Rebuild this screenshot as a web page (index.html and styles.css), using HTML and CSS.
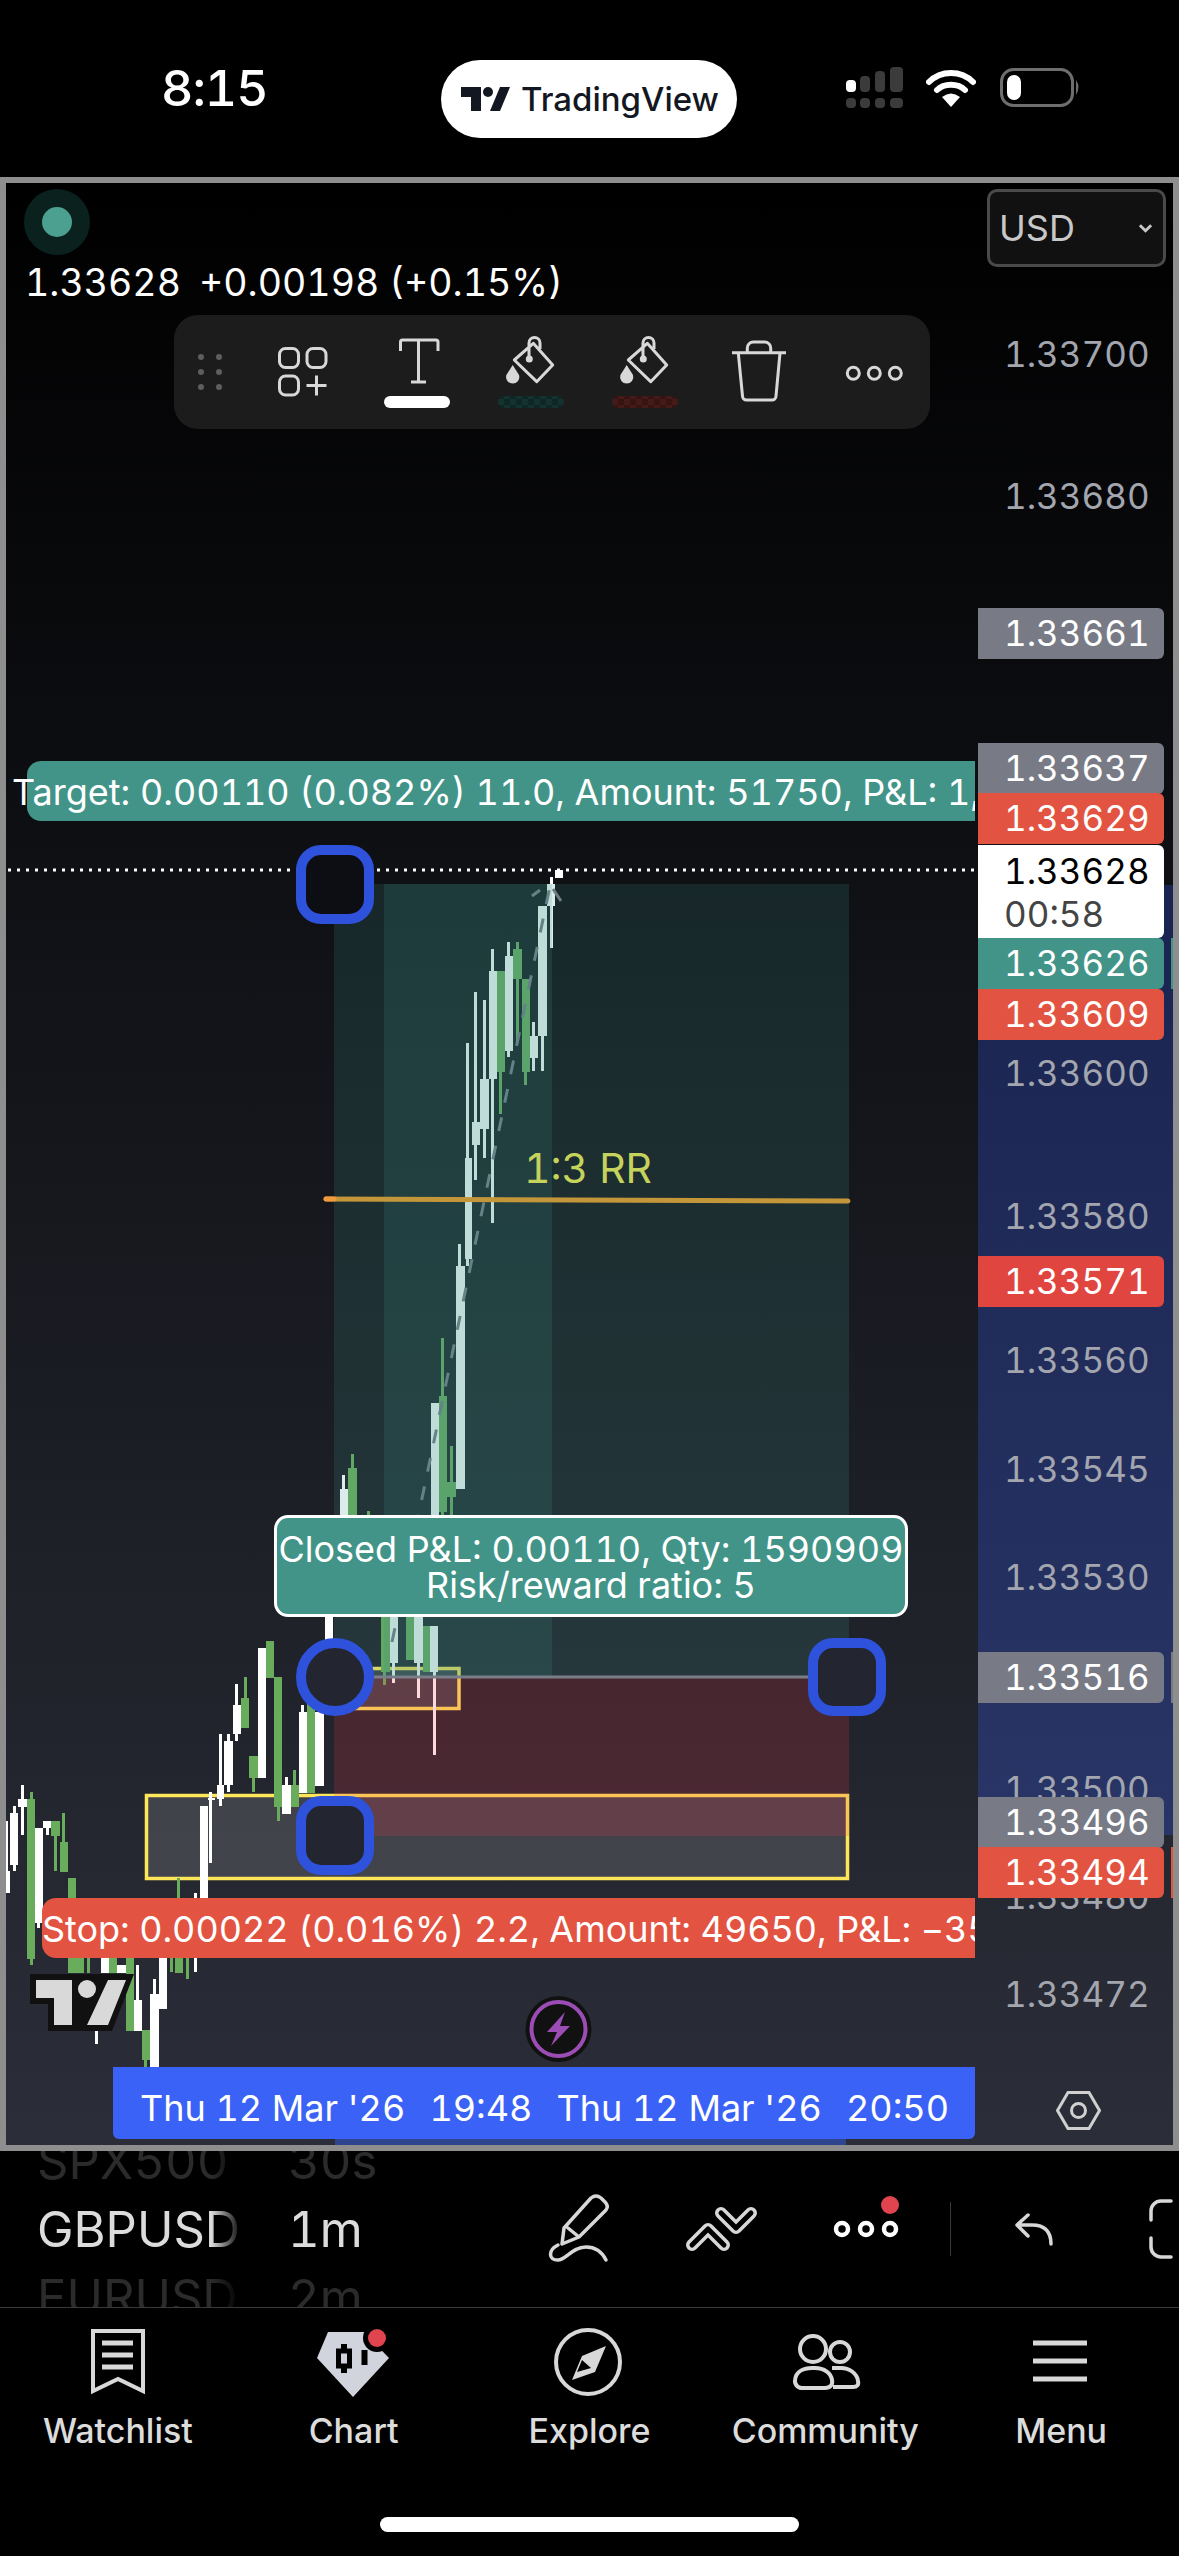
FILE: index.html
```html
<!DOCTYPE html>
<html lang="en">
<head>
    <meta charset="UTF-8"/>
    <title>GBPUSD chart</title>
    <link rel="stylesheet" href="styles.css">
</head>
<body>
<header class="status-bar">
    <span class="clock">8:15</span>
    <div class="app-pill">
        <svg class="pill-mark" viewBox="0 0 49 24"><path d="M0 0H20V24H10V10H0Z"/><circle cx="27" cy="5" r="5"/><path d="M39 0H49L39 24H29Z"/></svg>
        <span>TradingView</span>
    </div>
    <svg class="signal" viewBox="0 0 58 44">
        <rect class="on" x="0" y="14" width="10" height="12" rx="4"/>
        <rect x="14" y="10" width="10" height="16" rx="4"/>
        <rect x="29" y="5" width="10" height="21" rx="4"/>
        <rect x="44" y="1" width="13" height="25" rx="4"/>
        <rect x="0" y="32" width="10" height="10" rx="4"/>
        <rect x="14" y="32" width="10" height="10" rx="4"/>
        <rect x="29" y="32" width="10" height="10" rx="4"/>
        <rect x="44" y="32" width="13" height="10" rx="4"/>
    </svg>
    <svg class="wifi" viewBox="0 0 50 38">
        <path class="arc" d="M3 13C15 1 35 1 47 13"/>
        <path class="arc" d="M11 21C18 14 32 14 39 21"/>
        <path class="wedge" d="M16 28Q25 21 34 28L25 38Z"/>
    </svg>
    <svg class="battery" viewBox="0 0 82 40">
        <rect class="shell" x="1.5" y="1.5" width="71" height="36" rx="12"/>
        <rect class="level" x="7" y="7" width="14" height="25" rx="7"/>
        <path class="nub" d="M76 12Q81 19 76 27Z"/>
    </svg>
</header>

<main class="chart">
    <svg class="plot" viewBox="6 183 972 1962">
        <defs>
            <pattern id="checkTeal" width="12" height="12" patternUnits="userSpaceOnUse">
                <rect width="12" height="12" fill="#0e2624"/>
                <rect width="6" height="6" fill="#143230"/>
                <rect x="6" y="6" width="6" height="6" fill="#143230"/>
            </pattern>
            <pattern id="checkRed" width="12" height="12" patternUnits="userSpaceOnUse">
                <rect width="12" height="12" fill="#351412"/>
                <rect width="6" height="6" fill="#451b19"/>
                <rect x="6" y="6" width="6" height="6" fill="#451b19"/>
            </pattern>
        </defs>

        <!-- zones under the candles -->
        <rect class="zone" x="146.5" y="1795.5" width="701" height="83"/>
        <rect class="zone" x="356" y="1668.5" width="103" height="40"/>

        <!-- candles -->
        <path class="candle-up" d="M547 884h8v22h-8zM550 877h3v71h-3zM538 906h9v130h-9zM541 906h3v165h-3zM530 1036h8v22h-8zM532 1022h3v49h-3zM505 956h8v95h-8zM507 942h3v115h-3zM489 971h8v108h-8zM491 949h3v274h-3zM480 1079h9v50h-9zM483 1000h3v158h-3zM472 1122h8v23h-8zM474 992h3v188h-3zM465 1158h7v101h-7zM466 1043h3v223h-3zM456 1266h9v223h-9zM458 1244h3v26h-3zM431 1403h8v117h-8zM340 1489h8v31h-8zM342 1475h3v15h-3zM325 1616h8v29h-8zM390 1616h8v47h-8zM392 1616h3v67h-3zM414 1616h9v47h-9zM417 1616h3v82h-3zM430 1626h8v46h-8zM433 1626h3v129h-3zM258 1648h8v130h-8zM233 1705h8v29h-8zM235 1684h3v57h-3zM224 1741h9v44h-9zM227 1734h3v58h-3zM217 1785h7v14h-7zM219 1734h3v72h-3zM282 1785h9v29h-9zM285 1777h3v37h-3zM299 1712h8v81h-8zM301 1705h3v7h-3zM315 1712h9v74h-9zM209 1792h3v71h-3zM208 1798h7v2h-7zM200 1806h8v92h-8zM194 1893h3v79h-3zM6 1821h2v50h-2zM6 1871h4v22h-4zM10 1813h8v52h-8zM13 1806h3v65h-3zM18 1799h9v8h-9zM21 1785h3v50h-3zM35 1828h8v95h-8zM37 1828h3v100h-3zM43 1821h8v7h-8zM46 1821h3v14h-3zM101 1958h8v15h-8zM117 1965h9v8h-9zM134 2000h8v31h-8zM136 1965h3v35h-3zM150 1994h9v73h-9zM153 1979h3v15h-3zM159 1958h8v51h-8zM95 2031h3v13h-3z"/>
        <path class="candle-down" d="M522 979h8v93h-8zM524 979h3v106h-3zM513 949h9v30h-9zM516 942h3v100h-3zM497 971h8v101h-8zM499 971h3v143h-3zM447 1482h9v15h-9zM450 1446h3v74h-3zM439 1396h8v116h-8zM441 1338h3v182h-3zM348 1468h9v52h-9zM351 1454h3v16h-3zM367 1511h3v9h-3zM381 1616h9v56h-9zM383 1616h3v69h-3zM406 1616h8v44h-8zM423 1626h7v46h-7zM266 1641h8v37h-8zM274 1677h8v130h-8zM277 1677h3v144h-3zM249 1756h9v22h-9zM252 1756h3v36h-3zM241 1698h8v30h-8zM244 1677h3v21h-3zM291 1785h8v22h-8zM293 1770h3v15h-3zM307 1695h8v98h-8zM27 1799h8v160h-8zM30 1792h3v173h-3zM51 1821h9v15h-9zM54 1821h3v50h-3zM60 1842h8v30h-8zM62 1813h3v29h-3zM68 1878h8v95h-8zM76 1958h8v15h-8zM87 1958h3v15h-3zM109 1958h8v15h-8zM126 1958h8v73h-8zM142 2030h8v30h-8zM144 2030h3v37h-3zM170 1958h3v14h-3zM175 1958h8v15h-8zM186 1958h3v21h-3zM177 1878h3v20h-3z"/>

        <!-- position tool -->
        <path class="trend" d="M392 1642L550 886"/>
        <path class="trend-head" d="M532 896L540 890M553 889L561 901"/>
        <rect class="profit" x="334" y="884" width="515" height="793"/>
        <rect class="profit" x="384" y="884" width="168" height="793"/>
        <rect class="loss" x="334" y="1677" width="515" height="159"/>
        <path class="entry" d="M374 1677H808"/>
        <path class="rr-line" d="M326 1199L848 1201"/>
        <path class="rr-tip" d="M326 1199H334"/>
        <text class="rr-text" x="524" y="1183">1:3 RR</text>

        <path class="last-price" d="M8 870H975"/>
        <rect class="last-dot" x="555" y="870" width="8" height="8"/>

        <rect class="handle top" x="301" y="850" width="68" height="69" rx="20"/>
        <rect class="handle" x="301" y="1643" width="68" height="68" rx="34"/>
        <rect class="handle" x="813" y="1643" width="68" height="68" rx="20"/>
        <rect class="handle" x="301" y="1801" width="68" height="69" rx="20"/>

        <!-- watermark -->
        <path class="wm-back" d="M30 1974H134L112 2031H48V2004H30Z"/>
        <path class="wm-front" d="M36 1980H72V2025H54V1998H36Z"/>
        <circle class="wm-front" cx="87" cy="1989" r="9"/>
        <path class="wm-front" d="M108 1980H126L108 2025H87Z"/>

        <!-- lightning -->
        <circle class="bolt-back" cx="558.5" cy="2029" r="33"/>
        <circle class="bolt-ring" cx="558.5" cy="2029" r="27"/>
        <path class="bolt" d="M565 2012L547 2032H557L551 2046L570 2026H560Z"/>
    </svg>

    <div class="status-dot"></div>
    <div class="legend"><span>1.33628</span><span>+0.00198 (+0.15%)</span></div>
    <div class="currency">
        <span>USD</span>
        <svg viewBox="0 0 16 10"><path d="M2 2L8 8L14 2"/></svg>
    </div>

    <div class="float-bar">
        <svg class="grip" viewBox="0 0 72 114">
            <circle cx="27" cy="42" r="3"/><circle cx="45" cy="42" r="3"/>
            <circle cx="27" cy="57" r="3"/><circle cx="45" cy="57" r="3"/>
            <circle cx="27" cy="72" r="3"/><circle cx="45" cy="72" r="3"/>
        </svg>
        <svg viewBox="0 0 114 114">
            <rect x="33.5" y="33.5" width="19" height="19" rx="6"/>
            <rect x="61" y="33.5" width="19" height="19" rx="6"/>
            <rect x="33.5" y="61" width="19" height="19" rx="6"/>
            <path d="M60.5 70.5H80.5M70.5 60.5V80.5"/>
        </svg>
        <svg viewBox="0 0 114 114">
            <path d="M40.5 36V27a2 2 0 0 1 2-2H76a2 2 0 0 1 2 2v9M58.5 25V67M51 67H66"/>
            <rect class="underline" x="24" y="81" width="66" height="12" rx="6"/>
        </svg>
        <svg viewBox="0 0 114 114">
            <path d="M59.3 28.3L78.7 50L62.7 66.7L40.3 45ZM55 44V28a5.5 5.5 0 0 1 11 0V34"/>
            <circle class="solid" cx="55.3" cy="44" r="3.5"/>
            <path class="solid" d="M38.7 50L45 60a6.6 6.6 0 1 1-12.6 0Z"/>
            <rect fill="url(#checkTeal)" class="swatch" x="24" y="81" width="66" height="12" rx="6"/>
        </svg>
        <svg viewBox="0 0 114 114">
            <path d="M59.3 28.3L78.7 50L62.7 66.7L40.3 45ZM55 44V28a5.5 5.5 0 0 1 11 0V34"/>
            <circle class="solid" cx="55.3" cy="44" r="3.5"/>
            <path class="solid" d="M38.7 50L45 60a6.6 6.6 0 1 1-12.6 0Z"/>
            <rect fill="url(#checkRed)" class="swatch" x="24" y="81" width="66" height="12" rx="6"/>
        </svg>
        <svg viewBox="0 0 114 114">
            <path d="M30 37.7H84M45.3 37v-4a6 6 0 0 1 6-6h11.4a6 6 0 0 1 6 6v4M36.3 38L40.5 81a4 4 0 0 0 4 4H70a4 4 0 0 0 4-4L78 38"/>
        </svg>
        <svg viewBox="0 0 114 114">
            <circle cx="37.3" cy="58.3" r="6"/><circle cx="58.3" cy="58.3" r="6"/><circle cx="79.3" cy="58.3" r="6"/>
        </svg>
    </div>

    <div class="order-tag target"><span>Target: 0.00110 (0.082%) 11.0, Amount: 51750, P&amp;L: 1,</span></div>
    <div class="order-tag stop"><span>Stop: 0.00022 (0.016%) 2.2, Amount: 49650, P&amp;L: −35</span></div>
    <div class="closed-tag">Closed P&amp;L: 0.00110, Qty: 1590909<br>Risk/reward ratio: 5</div>

    <div class="time-axis">
        <span>Thu 12 Mar '26</span><span>19:48</span><span>Thu 12 Mar '26</span><span>20:50</span>
    </div>
    <div class="time-range"></div>

    <aside class="price-axis">
        <div class="band"></div>
        <span class="tick" style="top:146px">1.33700</span>
        <span class="tick" style="top:288px">1.33680</span>
        <span class="tick" style="top:865px">1.33600</span>
        <span class="tick" style="top:1008px">1.33580</span>
        <span class="tick" style="top:1152px">1.33560</span>
        <span class="tick" style="top:1261px">1.33545</span>
        <span class="tick" style="top:1369px">1.33530</span>
        <span class="tick" style="top:1581px">1.33500</span>
        <span class="tick" style="top:1688px">1.33480</span>
        <span class="tick" style="top:1786px">1.33472</span>

        <span class="price-tag grey" style="top:425px">1.33661</span>
        <span class="price-tag grey" style="top:560px">1.33637</span>
        <span class="price-tag red" style="top:610px">1.33629</span>
        <span class="price-tag now" style="top:662px">1.33628<small>00:58</small></span>
        <span class="price-tag green stub" style="top:755px">1.33626</span>
        <span class="price-tag red" style="top:806px">1.33609</span>
        <span class="price-tag clay" style="top:1073px">1.33571</span>
        <span class="price-tag grey stub" style="top:1469px">1.33516</span>
        <span class="price-tag grey" style="top:1614px">1.33496</span>
        <span class="price-tag red stub" style="top:1664px">1.33494</span>

        <svg class="axis-settings" viewBox="0 0 45 39">
            <path d="M1.5 19.5L12 1.5H33L43.5 19.5L33 37.5H12Z"/>
            <circle cx="22.5" cy="19.5" r="7"/>
        </svg>
    </aside>
</main>

<section class="tools">
    <div class="symbols">
        <div class="symbol dim"><b>SPX500</b><span>30s</span></div>
        <div class="symbol"><b>GBPUSD</b><span>1m</span></div>
        <div class="symbol dim"><b>EURUSD</b><span>2m</span></div>
    </div>
    <div class="tool-row">
        <svg viewBox="506 2151 144 156">
            <path d="M562 2244L564 2228L591 2198Q596 2194 601 2198L605 2202Q609 2206 606 2210L579 2237ZM568 2228L579 2237"/>
            <path d="M558 2245C548 2250 548 2260 558 2260C566 2260 572 2247 586 2247C596 2247 602 2252 606 2260"/>
        </svg>
        <svg viewBox="650 2151 144 156">
            <path class="ribbon" d="M692 2245L708 2229L724 2245"/>
            <path class="ribbon-in" d="M692 2245L708 2229L724 2245"/>
            <path class="ribbon" d="M721 2213L736 2228L751 2213"/>
            <path class="ribbon-in" d="M721 2213L736 2228L751 2213"/>
        </svg>
        <svg viewBox="794 2151 144 156">
            <circle class="ring" cx="842" cy="2229" r="6"/>
            <circle class="ring" cx="866" cy="2229" r="6"/>
            <circle class="ring" cx="890" cy="2229" r="6"/>
            <circle class="alert" cx="890" cy="2205" r="9"/>
        </svg>
        <div class="tool-sep"></div>
        <svg viewBox="961 2151 144 156">
            <path d="M1027 2215L1016 2225L1027 2236M1016 2225H1031Q1050 2225 1050 2244"/>
        </svg>
        <svg viewBox="1105 2151 144 156">
            <path d="M1170 2201H1160a10 10 0 0 0-10 10V2220M1150 2238V2247a10 10 0 0 0 10 10H1170"/>
        </svg>
    </div>
</section>

<nav class="tabs">
    <a class="tab">
        <svg viewBox="0 0 80 80">
            <path d="M15 7H65V67L40 55L15 67Z"/>
            <path class="thick" d="M24 19H55M24 31H55M24 43H55"/>
        </svg>
        <span>Watchlist</span>
    </a>
    <a class="tab">
        <svg viewBox="0 0 80 80">
            <path class="shield" d="M14 8H50L75 34L39 73L3 34Z"/>
            <path class="cut" d="M30 20V49"/>
            <rect class="cut-box" x="24.5" y="27" width="11" height="15"/>
            <path class="cut" d="M50.5 26V41"/>
            <circle class="cut-round" cx="63" cy="14" r="14"/>
            <circle class="alert" cx="63" cy="14" r="9"/>
        </svg>
        <span>Chart</span>
    </a>
    <a class="tab">
        <svg viewBox="0 0 80 80">
            <circle cx="39" cy="38" r="32"/>
            <path class="solid" d="M57 22L46 48L23 56L33 32Z"/>
            <path class="needle" d="M28 48L33 36L42 44Z"/>
        </svg>
        <span>Explore</span>
    </a>
    <a class="tab">
        <svg viewBox="0 0 80 80">
            <ellipse cx="28" cy="25" rx="13" ry="13"/>
            <circle cx="55" cy="28" r="10"/>
            <path d="M17 64a7 7 0 0 1-7-8c1-9 9-12 17-12h3c9 0 16 5 17 12c1 5-2 8-7 8Z"/>
            <path d="M47 44h9c8 0 16 5 17 13c1 4-1 6-5 6H48"/>
        </svg>
        <span>Community</span>
    </a>
    <a class="tab">
        <svg viewBox="0 0 80 80">
            <path class="thick" d="M12 19H66M12 37H66M12 55H66"/>
        </svg>
        <span>Menu</span>
    </a>
</nav>
<div class="home-indicator"></div>
</body>
</html>
```

FILE: styles.css
```css
* {
    box-sizing: border-box;
}

body {
    margin: 0;
    width: 1179px;
    height: 2556px;
    overflow: hidden;
    background-color: #000;
    color: #fff;
    font-family: Inter, 'Noto Sans', sans-serif;
    font-variant-numeric: tabular-nums;
}

/* status bar */
.status-bar {
    display: flex;
    align-items: center;
    height: 177px;
    padding: 20px 0 0 161px;
}

.clock {
    width: 280px;
    font-size: 50px;
    font-weight: 500;
    letter-spacing: -1px;
    margin-top: -22px;
}

.app-pill {
    display: flex;
    align-items: center;
    gap: 11px;
    width: 296px;
    height: 78px;
    padding-left: 20px;
    border-radius: 39px;
    background-color: #fff;
    color: #131722;
    font-size: 33px;
    font-weight: 500;
}

.pill-mark {
    width: 49px;
    height: 24px;
    fill: #131722;
}

.signal {
    width: 58px;
    height: 44px;
    margin-left: 109px;
    margin-top: -22px;
    fill: #3b3b3b;
}

.signal .on {
    fill: #fff;
}

.wifi {
    width: 50px;
    height: 38px;
    margin-left: 22px;
    margin-top: -22px;
}

.wifi .arc {
    fill: none;
    stroke: #fff;
    stroke-width: 6;
    stroke-linecap: round;
}

.wifi .wedge {
    fill: #fff;
}

.battery {
    width: 82px;
    height: 40px;
    margin-left: 24px;
    margin-top: -22px;
}

.battery .shell {
    fill: none;
    stroke: #6e6e6e;
    stroke-width: 3;
}

.battery .level {
    fill: #fff;
}

.battery .nub {
    fill: #6e6e6e;
}

/* chart frame */
.chart {
    position: relative;
    display: block;
    height: 1974px;
    border: 6px solid #8e8e8e;
    overflow: hidden;
    background: linear-gradient(to bottom, #000 0%, #2b2e39 100%);
}

.plot {
    position: absolute;
    left: 0;
    top: 0;
    width: 972px;
    height: 1962px;
}

.zone {
    fill: rgba(255, 255, 255, 0.135);
    stroke: #fde65a;
    stroke-width: 3.5;
}

.candle-up {
    fill: #fff;
}

.candle-down {
    fill: #69ad5c;
}

.trend {
    fill: none;
    stroke: #787a84;
    stroke-width: 3;
    stroke-dasharray: 14 15;
}

.trend-head {
    fill: none;
    stroke: #787a84;
    stroke-width: 3;
}

.profit {
    fill: rgba(60, 150, 140, 0.18);
}

.loss {
    fill: rgba(242, 54, 69, 0.19);
}

.entry {
    stroke: #7a7e88;
    stroke-width: 3;
}

.rr-line {
    stroke: #c4963a;
    stroke-width: 5;
    stroke-linecap: round;
}

.rr-tip {
    stroke: #f09a3b;
    stroke-width: 5;
    stroke-linecap: round;
}

.rr-text {
    fill: #c5d35c;
    font-size: 41px;
}

.last-price {
    stroke: #fff;
    stroke-width: 3;
    stroke-dasharray: 3 6;
}

.last-dot {
    fill: #fff;
}

.handle {
    fill: #232630;
    stroke: #2e52dc;
    stroke-width: 10;
}

.handle.top {
    fill: #0d0e13;
}

.wm-back {
    fill: #111;
}

.wm-front {
    fill: #d9d9d9;
}

.bolt-back {
    fill: #111;
}

.bolt-ring {
    fill: none;
    stroke: #9b4db5;
    stroke-width: 4;
}

.bolt {
    fill: #9b4db5;
}

/* things lying over the chart */
.status-dot {
    position: absolute;
    left: 18px;
    top: 6px;
    width: 66px;
    height: 66px;
    border-radius: 50%;
    background-color: #0b211e;
}

.status-dot::after {
    content: "";
    position: absolute;
    left: 18px;
    top: 18px;
    width: 30px;
    height: 30px;
    border-radius: 50%;
    background-color: #4ba08f;
}

.legend {
    position: absolute;
    left: 19px;
    top: 78px;
    display: flex;
    gap: 18px;
    font-size: 37.5px;
    line-height: 44px;
    white-space: nowrap;
}

.currency {
    position: absolute;
    left: 981px;
    top: 6px;
    display: flex;
    align-items: center;
    justify-content: space-between;
    width: 179px;
    height: 78px;
    padding: 0 10px 0 9px;
    border: 3px solid #4a4a4c;
    border-radius: 10px;
    background-color: #111;
    color: #c8c8c8;
    font-size: 36px;
}

.currency svg {
    width: 15px;
    height: 10px;
    fill: none;
    stroke: #c8c8c8;
    stroke-width: 3;
}

.float-bar {
    position: absolute;
    left: 168px;
    top: 132px;
    display: flex;
    width: 756px;
    height: 114px;
    border-radius: 24px;
    background-color: #1c1c1c;
}

.float-bar svg {
    flex: none;
    width: 114px;
    height: 114px;
    fill: none;
    stroke: #d8d8d8;
    stroke-width: 3;
    stroke-linejoin: round;
}

.float-bar .grip {
    width: 72px;
    fill: #5e5e5e;
    stroke: none;
}

.float-bar .solid {
    fill: #d8d8d8;
    stroke: none;
}

.float-bar .underline {
    fill: #fff;
    stroke: none;
}

.float-bar .swatch {
    stroke: none;
}

.order-tag {
    position: absolute;
    width: 969px;
    height: 60px;
    overflow: hidden;
    font-size: 36px;
    line-height: 62px;
    white-space: nowrap;
}

.order-tag span {
    position: relative;
}

.order-tag::before {
    content: "";
    position: absolute;
    top: 0;
    bottom: 0;
    right: 0;
    border-radius: 14px 0 0 14px;
}

.order-tag.target {
    left: 0;
    top: 578px;
}

.order-tag.target::before {
    left: 21px;
    background-color: #429488;
}

.order-tag.target span {
    left: 6px;
}

.order-tag.stop {
    left: 0;
    top: 1715px;
}

.order-tag.stop::before {
    left: 36px;
    background-color: #e25441;
}

.order-tag.stop span {
    left: 36px;
    letter-spacing: -0.05px;
}

.closed-tag {
    position: absolute;
    left: 268px;
    top: 1332px;
    width: 634px;
    height: 102px;
    padding-top: 13px;
    border: 3px solid #fff;
    border-radius: 14px;
    background-color: #429488;
    font-size: 36px;
    line-height: 36px;
    text-align: center;
    white-space: nowrap;
}

.time-axis {
    position: absolute;
    left: 107px;
    top: 1884px;
    display: flex;
    justify-content: space-between;
    width: 862px;
    height: 72px;
    padding: 5px 26px 0 27px;
    border-radius: 0 0 6px 6px;
    background-color: #3b62f6;
    font-size: 36px;
    line-height: 72px;
    white-space: nowrap;
}

.time-range {
    position: absolute;
    left: 329px;
    top: 1956px;
    width: 511px;
    height: 6px;
    background-color: #2f448f;
}

/* price axis */
.price-axis {
    position: absolute;
    left: 972px;
    top: 0;
    width: 195px;
    height: 100%;
}

.band {
    position: absolute;
    left: 0;
    top: 702px;
    width: 100%;
    height: 950px;
    background: linear-gradient(to bottom, #1a2450, #283566);
}

.tick,
.price-tag {
    position: absolute;
    left: 0;
    padding-left: 26px;
    font-size: 35px;
    line-height: 50px;
    white-space: nowrap;
}

.tick {
    height: 50px;
    color: #a3a6af;
}

.price-tag {
    width: 186px;
    height: 51px;
    border-radius: 0 6px 6px 0;
}

.price-tag.grey {
    background-color: #787b86;
}

.price-tag.red {
    background-color: #e25441;
}

.price-tag.clay {
    background-color: #e0453f;
}

.price-tag.green {
    background-color: #429488;
}

.price-tag.now {
    height: 93px;
    background-color: #fff;
    color: #000;
    line-height: 52px;
}

.price-tag.now small {
    display: block;
    margin-top: -5px;
    color: #444;
    font-size: 35px;
    line-height: 44px;
}

.price-tag.stub::after {
    content: "";
    position: absolute;
    left: 193px;
    top: 0;
    width: 2px;
    height: 100%;
    background: inherit;
}

.axis-settings {
    position: absolute;
    left: 78px;
    top: 1908px;
    width: 45px;
    height: 39px;
    fill: none;
    stroke: #d0d0d0;
    stroke-width: 3;
}

/* bottom tools */
.tools {
    display: flex;
    height: 157px;
    overflow: hidden;
    border-bottom: 1px solid #3a3a3a;
}

.symbols {
    display: flex;
    flex: none;
    flex-direction: column;
    justify-content: center;
    width: 506px;
    padding-left: 37px;
}

.symbol {
    display: flex;
    flex: none;
    align-items: center;
    height: 68px;
    color: #dcdcdc;
    font-size: 49px;
}

.symbol b {
    width: 205px;
    margin-right: 46px;
    overflow: hidden;
    font-weight: 400;
    -webkit-mask-image: linear-gradient(to right, #000 85%, transparent);
    mask-image: linear-gradient(to right, #000 85%, transparent);
}

.symbol.dim {
    color: #2b2b2b;
}

.tool-row {
    display: flex;
    flex: none;
    width: 744px;
}

.tool-row svg {
    flex: none;
    width: 144px;
    height: 156px;
    fill: none;
    stroke: #d8d8d8;
    stroke-width: 3.5;
    stroke-linejoin: round;
    stroke-linecap: round;
}

.tool-row .ribbon {
    stroke-width: 12;
}

.tool-row .ribbon-in {
    stroke: #000;
    stroke-width: 5;
}

.tool-row .ring {
    stroke: #fff;
    stroke-width: 4.5;
}

.alert {
    fill: #e0444e;
    stroke: none;
}

.tool-sep {
    flex: none;
    width: 1px;
    height: 54px;
    margin: 51px 11px 0 12px;
    background-color: #3a3a3a;
}

/* tab bar */
.tabs {
    display: flex;
    height: 209px;
}

.tab {
    display: flex;
    flex-direction: column;
    align-items: center;
    flex: 1;
    padding-top: 16px;
    color: #dcdcdc;
    font-size: 34px;
    font-weight: 500;
}

.tab svg {
    width: 80px;
    height: 80px;
    margin-bottom: 6px;
    fill: none;
    stroke: #d8d8d8;
    stroke-width: 4;
}

.tab .thick {
    stroke-width: 5;
}

.tab .solid {
    fill: #d8d8d8;
    stroke: none;
}

.tab .needle {
    fill: #000;
    stroke: none;
}

.tab .shield {
    fill: #d1d4dc;
    stroke: none;
}

.tab .cut {
    stroke: #000;
    stroke-width: 6;
}

.tab .cut-box {
    fill: #d1d4dc;
    stroke: #000;
    stroke-width: 5;
}

.tab .cut-round {
    fill: #000;
    stroke: none;
}

.home-indicator {
    width: 419px;
    height: 15px;
    margin: 0 auto;
    border-radius: 8px;
    background-color: #fff;
}
```
